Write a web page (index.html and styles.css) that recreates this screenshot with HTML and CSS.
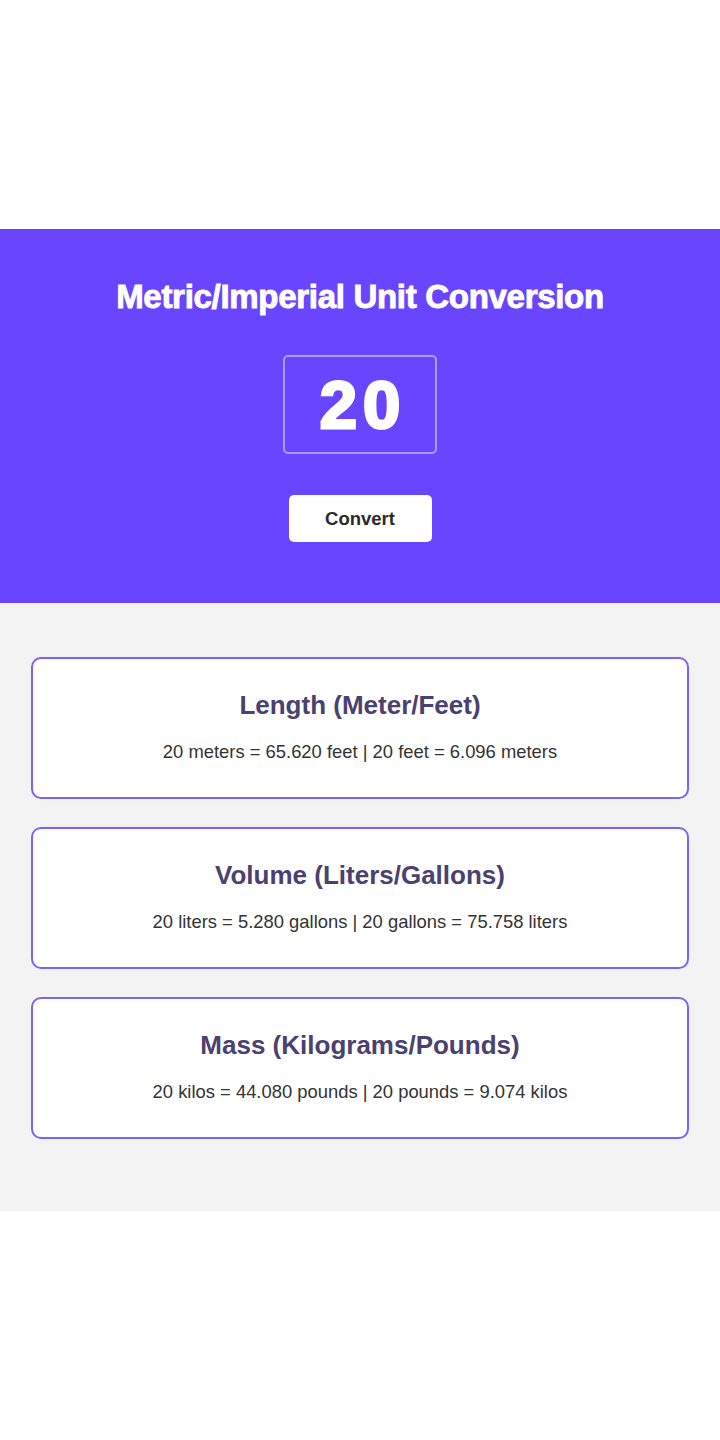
FILE: index.html
```html
<!DOCTYPE html>
<html lang="en">
<head>
<meta charset="utf-8">
<title>Metric/Imperial Unit Conversion</title>
<link rel="stylesheet" href="styles.css">
</head>
<body>
<main class="app">
  <section class="hero">
    <h1 class="hero-title">Metric/Imperial Unit Conversion</h1>
    <input class="hero-input" type="text" value="20">
    <button class="hero-button">Convert</button>
  </section>
  <section class="results">
    <div class="card">
      <h2 class="card-title">Length (Meter/Feet)</h2>
      <p class="card-text">20 meters = 65.620 feet | 20 feet = 6.096 meters</p>
    </div>
    <div class="card">
      <h2 class="card-title">Volume (Liters/Gallons)</h2>
      <p class="card-text">20 liters = 5.280 gallons | 20 gallons = 75.758 liters</p>
    </div>
    <div class="card">
      <h2 class="card-title">Mass (Kilograms/Pounds)</h2>
      <p class="card-text">20 kilos = 44.080 pounds | 20 pounds = 9.074 kilos</p>
    </div>
  </section>
</main>
</body>
</html>
```
FILE: styles.css
```css
* { box-sizing: border-box; }
html, body { margin: 0; padding: 0; }
body {
  min-height: 1440px;
  display: flex;
  flex-direction: column;
  justify-content: center;
  font-family: "Liberation Sans", Arial, sans-serif;
  background: #ffffff;
}
.app { width: 100%; }
.hero {
  background: #6a45ff;
  display: flex;
  flex-direction: column;
  align-items: center;
  padding: 49px 0 61px;
}
.hero-title {
  margin: 0;
  color: #ffffff;
  font-size: 33px;
  font-weight: 900;
  letter-spacing: -0.3px;
  line-height: 38px;
  -webkit-text-stroke: 0.9px #ffffff;
}
.hero-input {
  margin-top: 39px;
  width: 154px;
  height: 99px;
  background: transparent;
  border: 2px solid rgba(255,255,255,0.45);
  border-radius: 5px;
  color: #ffffff;
  font-family: "Liberation Sans", Arial, sans-serif;
  font-size: 67px;
  font-weight: 900;
  letter-spacing: 6px;
  text-indent: 6px;
  text-align: center;
  padding: 0;
  -webkit-text-stroke: 3px #ffffff;
  outline: none;
}
.hero-button {
  margin-top: 41px;
  width: 143px;
  height: 47px;
  background: #ffffff;
  border: none;
  border-radius: 5px;
  color: #2a2a2a;
  font-family: "Liberation Sans", Arial, sans-serif;
  font-size: 18.5px;
  font-weight: 700;
}
.results {
  background: #f3f3f3;
  padding: 54px 31px 72px;
  display: flex;
  flex-direction: column;
  gap: 28px;
}
.card {
  background: #ffffff;
  border: 2px solid #7b61ff;
  border-radius: 10px;
  height: 142px;
  display: flex;
  flex-direction: column;
  align-items: center;
  padding-top: 30px;
}
.card-title {
  margin: 0;
  color: #4a4170;
  font-size: 26px;
  font-weight: 700;
  line-height: 32px;
}
.card-text {
  margin: 20px 0 0;
  color: #333333;
  font-size: 18.4px;
  line-height: 22px;
}
```
